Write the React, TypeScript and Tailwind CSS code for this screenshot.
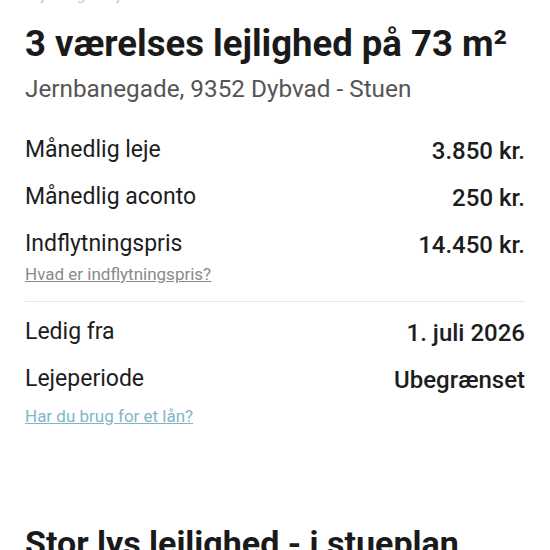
import React from "react";

interface IRow {
  label: string;
  value: string;
}

const priceRows: IRow[] = [
  { label: "Månedlig leje", value: "3.850 kr." },
  { label: "Månedlig aconto", value: "250 kr." },
  { label: "Indflytningspris", value: "14.450 kr." },
];

const periodRows: IRow[] = [
  { label: "Ledig fra", value: "1. juli 2026" },
  { label: "Lejeperiode", value: "Ubegrænset" },
];

const Row: React.FC<IRow> = ({ label, value }) => (
  <div className="flex justify-between items-center h-[47px]">
    <span className="text-[23px] text-[#1d1d1d]">{label}</span>
    <span className="text-[24px] font-medium text-[#1d1d1d]">{value}</span>
  </div>
);

const App: React.FC = () => {
  return (
    <div
      className="w-[550px] h-[550px] overflow-hidden bg-white px-[25px]"
      style={{ fontFamily: "Roboto, 'Noto Sans', sans-serif" }}
    >
      {/* previous line, cut off at the top */}
      <div className="-mt-[14px] h-[18px] text-[15px] leading-[18px] text-[#c8c8c8]">Lejebolig til leje</div>
      <h1 className="mt-[18px] text-[36.5px] leading-[44px] font-bold text-[#1a1a1a]">
        3 værelses lejlighed på 73 m²
      </h1>
      <p className="mt-[8px] text-[24.3px] leading-[30px] text-[#555]">
        Jernbanegade, 9352 Dybvad - Stuen
      </p>

      <div className="mt-[23px]">
        {priceRows.map((row) => (
          <Row key={row.label} {...row} />
        ))}
        <a className="block -mt-[5px] text-[17px] leading-[22px] text-[#8a8a8a] underline">
          Hvad er indflytningspris?
        </a>
      </div>

      <div className="mt-[16px] border-t border-[#e6e6e6]" />

      <div className="mt-[7px]">
        {periodRows.map((row) => (
          <Row key={row.label} {...row} />
        ))}
        <a className="block mt-[2px] text-[17px] leading-[22px] text-[#7fb6c9] underline">
          Har du brug for et lån?
        </a>
      </div>

      <h2 className="mt-[94px] text-[34px] leading-[44px] font-bold text-[#1a1a1a]">
        Stor lys lejlighed - i stueplan
      </h2>
    </div>
  );
};

export default App;
